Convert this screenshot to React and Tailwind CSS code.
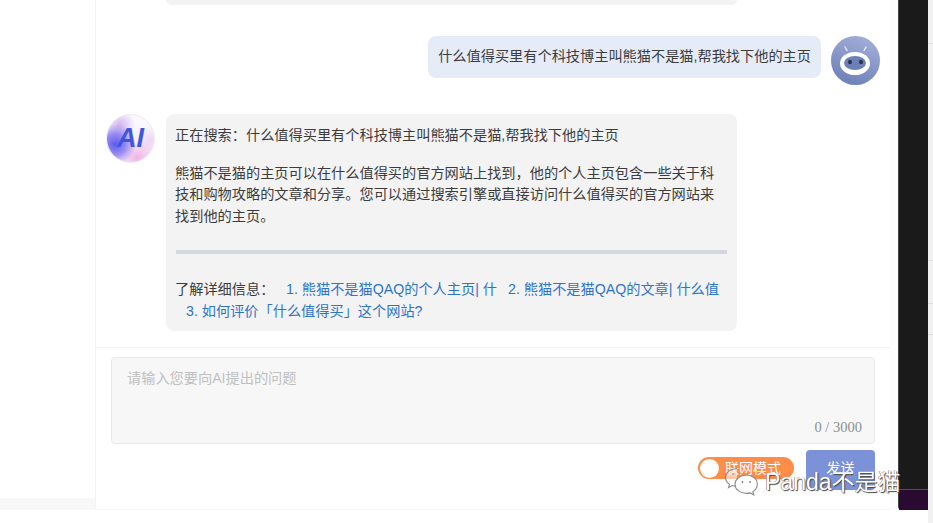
const font = '[font-family:"Liberation_Sans","Noto_Sans_CJK_SC",sans-serif]'

function RobotAvatar() {
  return (
    <svg width="49" height="49" viewBox="0 0 49 49" className="shrink-0">
      <defs>
        <linearGradient id="robot" x1="0.7" y1="0" x2="0.3" y2="1">
          <stop offset="0" stopColor="#a1aed8" />
          <stop offset="1" stopColor="#6c80b8" />
        </linearGradient>
      </defs>
      <circle cx="24.5" cy="24.5" r="24.5" fill="url(#robot)" />
      <path d="M14 11l2 3.500M35 11l-2 3.500" stroke="#e6eaf6" strokeWidth="1.500" strokeLinecap="round" />
      <ellipse cx="24" cy="27.500" rx="15" ry="11.500" fill="#fff" />
      <ellipse cx="24" cy="27" rx="11" ry="7" fill="#6c80b8" />
      <ellipse cx="19" cy="26" rx="2" ry="2.300" fill="#2a3350" />
      <ellipse cx="30" cy="26" rx="2" ry="2.300" fill="#2a3350" />
    </svg>
  )
}

function AiAvatar() {
  return (
    <div className="w-[49px] h-[49px] shrink-0 rounded-full overflow-hidden border border-[#eeeaf5] bg-[radial-gradient(circle_at_18%_62%,#5a5cf0_0%,#9a8cf0_22%,transparent_42%),radial-gradient(circle_at_65%_92%,#f0b4e6_0%,transparent_38%),radial-gradient(circle_at_28%_22%,#d2b4f0_0%,transparent_30%),radial-gradient(circle_at_92%_55%,#f0d4f4_0%,transparent_30%),linear-gradient(#fbf8fe,#f8f0fb)] flex items-center justify-center">
      <span className="text-[27px] leading-none font-bold italic text-[#3f56e0] [font-family:'Liberation_Sans',sans-serif]">AI</span>
    </div>
  )
}

function WechatMark() {
  return (
    <svg width="36" height="29" viewBox="0 0 36 29" fill="none" strokeWidth="1.100" className="shrink-0">
      <path d="M13 1.500C6.500 1.500 1.500 5.500 1.500 10.500c0 2.800 1.500 5.200 4 6.800l-1 3.200 3.600-2c1.500.5 3 .7 4.900.7" fill="rgba(255,255,255,0.55)" stroke="#8a8a8a" />
      <path d="M22.500 8C16 8 11 12.200 11 17.200s5 9.200 11.500 9.200c1.300 0 2.600-.2 3.800-.5l3.500 2-.9-3.200c2.700-1.700 4.400-4.400 4.400-7.500C33.800 12.200 28.500 8 22.500 8z" fill="#fff" stroke="#8a8a8a" />
      <circle cx="18.500" cy="15" r="1" fill="#8a8a8a" />
      <circle cx="26" cy="15" r="1" fill="#8a8a8a" />
      <circle cx="9" cy="7" r="1" fill="#b0a090" />
      <circle cx="16" cy="6" r="1" fill="#b0a090" />
    </svg>
  )
}

export default function App() {
  return (
    <div className={`relative w-[933px] h-[523px] overflow-hidden bg-white flex ${font}`}>
      {/* left strip */}
      <div className="w-[96px] h-[510px] flex flex-col justify-end border-r border-[#f3f3f3]">
        <div className="h-[12px] bg-[#f8f8f8]" />
      </div>

      {/* chat panel */}
      <div className="w-[794px] h-[510px] flex flex-col border-b border-[#f5f5f5]">
        <div className="h-[347px] px-[10px] flex flex-col">
          <div className="ml-[60px] w-[571px] h-[5px] bg-[#f3f3f4] rounded-b-lg" />

          <div className="mt-[31px] flex justify-end gap-[10px]">
            <div className="h-[42px] px-[10px] rounded-lg bg-[#e6ebf8] text-[14.200px] text-[#3c3c3c] flex items-center">
              什么值得买里有个科技博主叫熊猫不是猫,帮我找下他的主页
            </div>
            <RobotAvatar />
          </div>

          <div className="mt-[29px] flex gap-[11px]">
            <AiAvatar />
            <div className="w-[571px] h-[217px] rounded-lg bg-[#f3f3f4] pl-[9px] pr-[10px] pt-[11px] text-[14.200px] leading-[21.500px] text-[#3c3c3c]">
              <p>正在搜索：什么值得买里有个科技博主叫熊猫不是猫,帮我找下他的主页</p>
              <p className="mt-[16px]">熊猫不是猫的主页可以在什么值得买的官方网站上找到，他的个人主页包含一些关于科技和购物攻略的文章和分享。您可以通过搜索引擎或直接访问什么值得买的官方网站来找到他的主页。</p>
              <div className="mt-[23px] ml-[1px] h-[4px] bg-[#d3d6dc]" />
              <div className="mt-[25px] flex flex-wrap">
                <span className="w-[111px] shrink-0">了解详细信息：</span>
                <a className="w-[222px] whitespace-nowrap text-[#2f74c8]">1. 熊猫不是猫QAQ的个人主页| 什</a>
                <a className="w-[209px] whitespace-nowrap text-[#2f74c8]">2. 熊猫不是猫QAQ的文章| 什么值</a>
                <a className="ml-[11px] whitespace-nowrap text-[#2f74c8]">3. 如何评价「什么值得买」这个网站?</a>
              </div>
            </div>
          </div>
        </div>

        {/* input */}
        <div className="flex-1 border-t border-[#f3f3f3] pt-[9px] px-[15px]">
          <div className="relative w-[764px] h-[87px] rounded border border-[#e9e9e9] bg-[#f7f7f7] px-[15px] pt-[10px] text-[14.200px] leading-[21px] text-[#c0c0c0]">
            请输入您要向AI提出的问题
            <span className="absolute right-[12px] bottom-[5px] text-[14.500px] text-[#8a8f94] [font-family:'Liberation_Serif',serif]">0 / 3000</span>
          </div>
          <div className="mt-[6px] flex justify-end items-start gap-[12px]">
            <div className="mt-[7px] w-[96px] h-[22px] rounded-full bg-[#ff8c47] flex items-center pl-[2px] gap-[6px] text-[14px] text-white">
              <span className="w-[19px] h-[19px] rounded-full bg-white" />
              联网模式
            </div>
            <div className="w-[69px] h-[40px] pb-[3px] rounded-sm bg-[#7b91d8] text-[14.200px] text-white flex items-center justify-center">发送</div>
          </div>
        </div>
      </div>

      {/* right side of the window behind */}
      <div className="w-[8px] h-[510px] bg-[#fdfdfd]" />
      <div className="w-[30px] h-[510px] flex flex-col rounded-bl bg-[#1a1a1a] border-l border-[#444]">
        <div className="flex-1" />
        <div className="h-[21px] bg-[#2a0a30] border-t border-[#5a4a5c]" />
      </div>
      <div className="w-[5px] h-[523px] bg-[#f1f1f1] flex flex-col">
        <div className="mt-[43px] h-px bg-[#ddd]" />
        <div className="mt-[216px] h-px bg-[#ddd]" />
        <div className="mt-[42px] h-px bg-[#ddd]" />
        <div className="mt-[30px] h-px bg-[#ddd]" />
      </div>

      {/* watermark */}
      <div className="absolute left-[724px] top-[467px] flex items-center gap-[5px]">
        <WechatMark />
        <span className="text-[23px] leading-[26px] text-white [text-shadow:1px_1px_1px_#444,-0.5px_-0.5px_0.5px_#666]">Panda不是猫</span>
      </div>
    </div>
  )
}
